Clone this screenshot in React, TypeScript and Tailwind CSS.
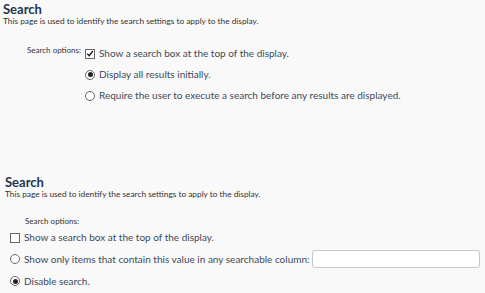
import { useState } from "react";

function Check({ checked }: { checked: boolean }) {
  return (
    <span className="relative inline-flex h-[10px] w-[10px] shrink-0 items-center justify-center border border-[#666] bg-white">
      {checked && (
        <svg viewBox="0 0 10 10" className="h-[9px] w-[9px]">
          <path d="M1.5 5.2 L4 7.6 L8.6 1.8" fill="none" stroke="#222" strokeWidth="1.8" />
        </svg>
      )}
    </span>
  );
}

function Radio({ checked }: { checked: boolean }) {
  return (
    <span className="inline-flex h-[10px] w-[10px] shrink-0 items-center justify-center rounded-full border border-[#666] bg-white">
      {checked && <span className="h-[5px] w-[5px] rounded-full bg-[#222]" />}
    </span>
  );
}

function Header() {
  return (
    <>
      <h2 className="text-[13px] font-bold leading-[14px] text-[#1f3550]">Search</h2>
      <p className="text-[8.3px] leading-[10px] text-[#333]">
        This page is used to identify the search settings to apply to the display.
      </p>
    </>
  );
}

export default function App() {
  const [mode, setMode] = useState("all");
  const [mode2, setMode2] = useState("disable");
  const [filter, setFilter] = useState("");

  return (
    <div className="h-[293px] w-[485px] overflow-hidden bg-[#f9f9f9] font-['Lato','Open_Sans',sans-serif] text-[#3d4958]">
      <section className="px-[3px] pt-[2px]">
        <Header />
        <div className="mt-[17px] flex">
          <div className="w-[82px] pr-[4px] pt-[2px] text-right text-[8px] leading-[10px] text-[#333]">
            Search options:
          </div>
          <div className="flex flex-col whitespace-nowrap text-[10px]">
            <label className="flex h-[21px] items-center gap-[4px]">
              <Check checked={true} />
              <span>Show a search box at the top of the display.</span>
            </label>
            <label className="flex h-[21px] items-center gap-[4px]" onClick={() => setMode("all")}>
              <Radio checked={mode === "all"} />
              <span>Display all results initially.</span>
            </label>
            <label className="flex h-[21px] items-center gap-[4px]" onClick={() => setMode("require")}>
              <Radio checked={mode === "require"} />
              <span>Require the user to execute a search before any results are displayed.</span>
            </label>
          </div>
        </div>
      </section>

      <section className="mt-[69px] px-[5px]">
        <Header />
        <div className="mt-[17px] pl-[20px] text-[8px] leading-[10px] text-[#333]">Search options:</div>
        <div className="mt-[1px] flex flex-col whitespace-nowrap pl-[5px] text-[10px]">
          <label className="flex h-[21px] items-center gap-[4px]">
            <Check checked={false} />
            <span>Show a search box at the top of the display.</span>
          </label>
          <label className="flex h-[22px] items-center gap-[4px]" onClick={() => setMode2("only")}>
            <Radio checked={mode2 === "only"} />
            <span>Show only items that contain this value in any searchable column:</span>
            <input
              value={filter}
              onChange={(e) => setFilter(e.target.value)}
              className="-ml-[2px] h-[18px] w-[168px] rounded-[3px] border border-[#c8c8c8] bg-white"
            />
          </label>
          <label className="flex h-[22px] items-center gap-[4px]" onClick={() => setMode2("disable")}>
            <Radio checked={mode2 === "disable"} />
            <span>Disable search.</span>
          </label>
        </div>
      </section>
    </div>
  );
}
